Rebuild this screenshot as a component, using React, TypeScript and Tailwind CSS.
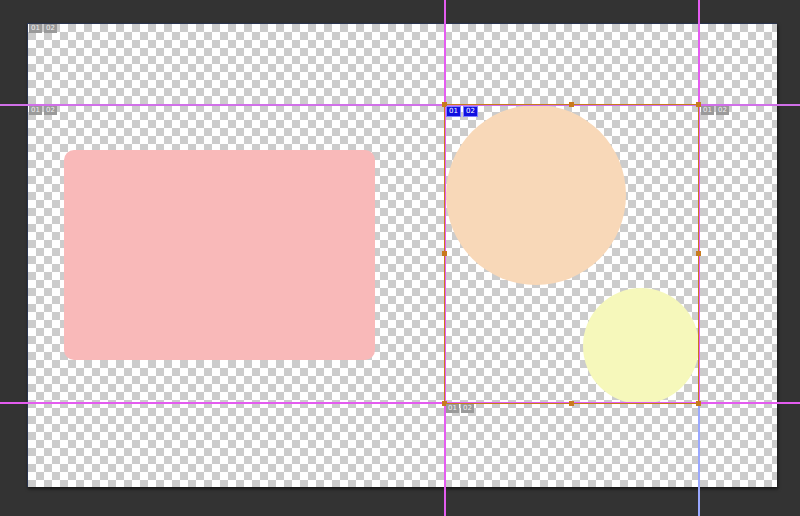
const Label = ({ blue = false }: { blue?: boolean }) => (
    <div className="flex gap-[2px] font-['DejaVu_Sans',sans-serif] text-[7px] leading-[9px]">
        <span className={blue ? "px-[2px] bg-[#1010e0] text-white border border-[#8080ff]" : "px-[2px] bg-[#9a9a9a] text-[#eeeeee]"}>01</span>
        <span className={blue ? "px-[2px] bg-[#1010e0] text-white border border-[#8080ff]" : "px-[2px] bg-[#9a9a9a] text-[#eeeeee]"}>02</span>
    </div>
)

const Handle = ({ cls }: { cls: string }) => (
    <div className={`absolute w-[5px] h-[5px] bg-[#c87a1e] ${cls}`} />
)

const App: React.FC = () => {
    return (
        <main className="relative w-[800px] h-[516px] bg-[#333333] overflow-hidden pl-[27px] pt-[23px]">
            <div className="relative w-[750px] h-[464px] border-l border-t border-[#2a3550] shadow-[1px_2px_3px_rgba(0,0,0,0.6)] bg-[conic-gradient(#cccccc_25%,#ffffff_0_50%,#cccccc_0_75%,#ffffff_0)] bg-[length:16px_16px]">
                {/* artwork on the canvas */}
                <div className="absolute left-[36px] top-[126px] w-[311px] h-[210px] rounded-[10px] bg-[#f9b9b9]" />
                <div className="absolute left-[418px] top-[81px] w-[180px] h-[180px] rounded-full bg-[#f8d8b8]" />
                <div className="absolute left-[555px] top-[264px] w-[116px] h-[116px] rounded-full bg-[#f6f8bb]" />
            </div>

            {/* guides */}
            <div className="absolute left-[444px] top-0 w-[2px] h-[516px] bg-[#e45cf0]" />
            <div className="absolute left-[698px] top-0 w-[2px] h-[404px] bg-[#e45cf0]" />
            <div className="absolute left-[698px] top-[404px] w-[2px] h-[112px] bg-[#9aa8ff]" />
            <div className="absolute left-0 top-[104px] w-[800px] h-[2px] bg-[#d070e8]" />
            <div className="absolute left-0 top-[402px] w-[800px] h-[2px] bg-[#e45cf0]" />

            {/* selection */}
            <div className="absolute left-[444px] top-[104px] w-[255px] h-[300px] border border-[#c87a1e]">
                <Handle cls="-left-[3px] -top-[3px]" />
                <Handle cls="left-[124px] -top-[3px]" />
                <Handle cls="-right-[3px] -top-[3px]" />
                <Handle cls="-left-[3px] top-[146px]" />
                <Handle cls="-right-[3px] top-[146px]" />
                <Handle cls="-left-[3px] -bottom-[3px]" />
                <Handle cls="left-[124px] -bottom-[3px]" />
                <Handle cls="-right-[3px] -bottom-[3px]" />
            </div>

            {/* slice labels */}
            <div className="absolute left-[29px] top-[24px]"><Label /></div>
            <div className="absolute left-[29px] top-[106px]"><Label /></div>
            <div className="absolute left-[446px] top-[106px]"><Label blue /></div>
            <div className="absolute left-[701px] top-[106px]"><Label /></div>
            <div className="absolute left-[446px] top-[404px]"><Label /></div>
        </main>
    )
}
export default App
